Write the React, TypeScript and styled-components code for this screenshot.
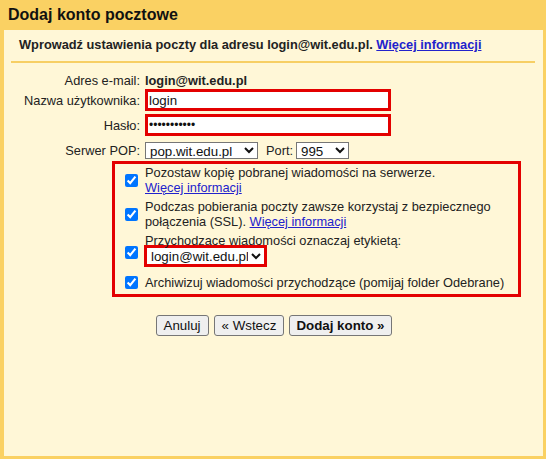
import styled, { createGlobalStyle } from "styled-components";

const GlobalStyle = createGlobalStyle`
  html, body {
    margin: 0;
    padding: 0;
    background: #fad163;
  }
  body {
    font-family: "Liberation Sans", Arial, sans-serif;
    color: #222;
  }
`;

const Page = styled.div`
  width: 546px;
  height: 459px;
  box-sizing: border-box;
  padding: 0 3px 3px 4px;
  background: #fad163;
  display: flex;
  flex-direction: column;
`;

const Title = styled.h2`
  margin: 0;
  padding-left: 4px;
  height: 30px;
  line-height: 30px;
  font-size: 16px;
  font-weight: bold;
  color: #111;
`;

const Panel = styled.div`
  flex: 1;
  background: #fff7d7;
  display: flex;
  flex-direction: column;
`;

const Intro = styled.div`
  margin: 0 8px 0 7px;
  padding: 7px 0 9px 8px;
  border-bottom: 2px solid #f7cf64;
  font-size: 12.8px;
  line-height: 15px;
  font-weight: bold;
  color: #222;
`;

const Link = styled.a<{ $bold?: boolean }>`
  color: #2222cc;
  text-decoration: underline;
  font-weight: ${p => (p.$bold ? "bold" : "normal")};
  cursor: pointer;
`;

const Form = styled.div`
  padding-top: 10px;
  display: flex;
  flex-direction: column;
  font-size: 12.8px;
  line-height: 15px;
`;

const Row = styled.div<{ $top?: number; $h?: number }>`
  display: grid;
  grid-template-columns: 136px 1fr;
  column-gap: 5px;
  align-items: center;
  margin-top: ${p => p.$top ?? 0}px;
  height: ${p => p.$h ?? 15}px;
`;

const Label = styled.div`
  text-align: right;
  color: #222;
  white-space: nowrap;
`;

const Value = styled.div<{ $bold?: boolean }>`
  display: flex;
  align-items: center;
  font-weight: ${p => (p.$bold ? "bold" : "normal")};
  white-space: nowrap;
`;

const RedField = styled.div<{ $w: number; $shift?: number }>`
  box-sizing: border-box;
  width: ${p => p.$w}px;
  height: 22px;
  border: 3px solid #e30000;
  background: #fff;
  margin-left: ${p => p.$shift ?? 0}px;
  display: flex;
  align-items: center;
`;

const TextInput = styled.input<{ $dots?: boolean }>`
  box-sizing: border-box;
  width: 100%;
  height: 100%;
  border: none;
  outline: none;
  background: #fff;
  padding: 0 0 0 1px;
  margin: 0;
  font-family: "Liberation Sans", Arial, sans-serif;
  font-size: ${p => (p.$dots ? "12px" : "13.33px")};
  color: #111;
`;

const Select = styled.select<{ $w: number }>`
  box-sizing: border-box;
  width: ${p => p.$w}px;
  height: 17px;
  margin: 0;
  font-family: "Liberation Sans", Arial, sans-serif;
  font-size: 13.33px;
  color: #111;
  background: #fff;
`;

const PlainSelect = styled.select`
  box-sizing: border-box;
  width: 100%;
  height: 16px;
  margin: 0;
  border: none;
  outline: none;
  background: #fff;
  font-family: "Liberation Sans", Arial, sans-serif;
  font-size: 13.33px;
  color: #111;
`;

const Inline = styled.span`
  margin: 0 3px 0 8px;
`;

const OptionsBox = styled.div`
  box-sizing: border-box;
  margin: 2px 0 0 108px;
  width: 409px;
  border: 3px solid #e30000;
  padding: 1px 0 4px;
  display: flex;
  flex-direction: column;
  gap: 4px;
`;

const OptionRow = styled.label`
  display: grid;
  grid-template-columns: 23px 1fr;
  column-gap: 7px;
  align-items: center;
`;

const Check = styled.input`
  justify-self: end;
  width: 13px;
  height: 13px;
  margin: 0;
  accent-color: #0075ff;
`;

const OptionText = styled.div`
  color: #222;
`;

const LabelSelect = styled.div`
  margin: -3px 0 4px -1px;
`;

const Buttons = styled.div`
  margin-top: 18px;
  display: flex;
  justify-content: center;
  gap: 5px;
`;

const Button = styled.button<{ $primary?: boolean }>`
  box-sizing: border-box;
  height: 21px;
  padding: ${p => (p.$primary ? "1px 6px" : "1px 7px")};
  border: 1px solid #767676;
  border-radius: 3px;
  background: #efefef;
  font-family: "Liberation Sans", Arial, sans-serif;
  font-size: 13.33px;
  font-weight: ${p => (p.$primary ? "bold" : "normal")};
  color: #111;
`;

export default function App() {
  return (
    <>
      <GlobalStyle />
      <Page>
        <Title>Dodaj konto pocztowe</Title>
        <Panel>
          <Intro>
            Wprowadź ustawienia poczty dla adresu login@wit.edu.pl. <Link $bold>Więcej informacji</Link>
          </Intro>
          <Form>
            <Row>
              <Label>Adres e-mail:</Label>
              <Value $bold>login@wit.edu.pl</Value>
            </Row>
            <Row $top={1} $h={22}>
              <Label>Nazwa użytkownika:</Label>
              <Value>
                <RedField $w={246}>
                  <TextInput type="text" defaultValue="login" />
                </RedField>
              </Value>
            </Row>
            <Row $top={3} $h={22}>
              <Label>Hasło:</Label>
              <Value>
                <RedField $w={246}>
                  <TextInput $dots type="password" defaultValue="12345678901" />
                </RedField>
              </Value>
            </Row>
            <Row $top={5} $h={18}>
              <Label>Serwer POP:</Label>
              <Value>
                <Select $w={113} defaultValue="pop.wit.edu.pl">
                  <option>pop.wit.edu.pl</option>
                </Select>
                <Inline>Port:</Inline>
                <Select $w={53} defaultValue="995">
                  <option>995</option>
                  <option>110</option>
                </Select>
              </Value>
            </Row>
            <OptionsBox>
              <OptionRow>
                <Check type="checkbox" defaultChecked />
                <OptionText>
                  Pozostaw kopię pobranej wiadomości na serwerze.
                  <br />
                  <Link>Więcej informacji</Link>
                </OptionText>
              </OptionRow>
              <OptionRow>
                <Check type="checkbox" defaultChecked />
                <OptionText>
                  Podczas pobierania poczty zawsze korzystaj z bezpiecznego
                  <br />
                  połączenia (SSL). <Link>Więcej informacji</Link>
                </OptionText>
              </OptionRow>
              <OptionRow>
                <Check type="checkbox" defaultChecked />
                <OptionText>
                  Przychodzace wiadomości oznaczaj etykietą:
                  <LabelSelect>
                    <RedField $w={123}>
                      <PlainSelect defaultValue="login@wit.edu.pl">
                        <option>login@wit.edu.pl</option>
                      </PlainSelect>
                    </RedField>
                  </LabelSelect>
                </OptionText>
              </OptionRow>
              <OptionRow>
                <Check type="checkbox" defaultChecked />
                <OptionText>Archiwizuj wiadomości przychodzące (pomijaj folder Odebrane)</OptionText>
              </OptionRow>
            </OptionsBox>
            <Buttons>
              <Button>Anuluj</Button>
              <Button>« Wstecz</Button>
              <Button $primary>Dodaj konto »</Button>
            </Buttons>
          </Form>
        </Panel>
      </Page>
    </>
  );
}
